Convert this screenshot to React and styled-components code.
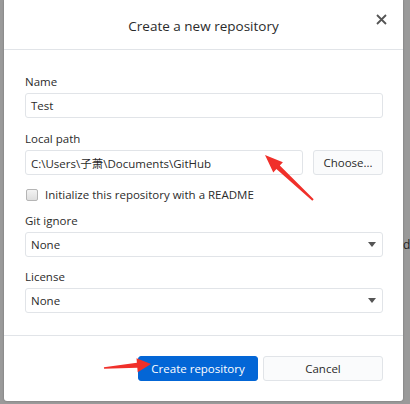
import React from 'react';
import styled, { createGlobalStyle } from 'styled-components';

const GlobalStyle = createGlobalStyle`
  html, body {
    margin: 0;
    padding: 0;
    background: #8f8f8f;
  }
  body {
    font-family: "Open Sans", "Noto Sans", "Noto Sans CJK SC", sans-serif;
    color: #24292e;
  }
`;

const Backdrop = styled.div`
  position: relative;
  width: 410px;
  height: 404px;
  overflow: hidden;
  background: #9a9a9a;
  padding: 0 7px 3px 4px;
  box-sizing: border-box;
`;

const Dialog = styled.div`
  background: #fff;
  height: 401px;
  border-radius: 0 0 3px 3px;
  box-shadow: 0 0 2px rgba(0,0,0,0.3);
  display: flex;
  flex-direction: column;
`;

const Header = styled.div`
  position: relative;
  height: 50px;
  border-bottom: 1px solid #e1e4e8;
  display: flex;
  align-items: center;
  justify-content: center;
  box-sizing: border-box;
  padding-top: 2px;
`;

const Title = styled.h1`
  margin: 0;
  font-size: 13.5px;
  font-weight: 500;
  color: #2b2b2b;
`;

const Close = styled.button`
  position: absolute;
  right: 14px;
  top: 11px;
  width: 16px;
  height: 16px;
  padding: 0;
  border: 0;
  background: none;
  display: flex;
  align-items: center;
  justify-content: center;
`;

const Body = styled.div`
  padding: 24px 20px 0 21px;
  display: flex;
  flex-direction: column;
  height: 286px;
  box-sizing: border-box;
  border-bottom: 1px solid #e1e4e8;
`;

const Label = styled.label`
  font-size: 11.5px;
  color: #2b2b2b;
  line-height: 16px;
  display: block;
  margin-bottom: 3px;
`;

const Field = styled.div`
  margin-bottom: ${p => p.mb || 13}px;
`;

const Input = styled.div`
  height: 25px;
  box-sizing: border-box;
  border: 1px solid #e1e4e8;
  border-radius: 3px;
  font-size: 11.5px;
  color: #2b2b2b;
  padding: 0 5px;
  display: flex;
  align-items: center;
  flex: 1;
  background: #fff;
  white-space: nowrap;
`;

const Row = styled.div`
  display: flex;
  gap: 10px;
`;

const Button = styled.div`
  height: 25px;
  box-sizing: border-box;
  border: 1px solid ${p => (p.primary ? '#0366d6' : '#e1e4e8')};
  border-radius: 3px;
  background: ${p => (p.primary ? '#0366d6' : '#fafbfc')};
  color: ${p => (p.primary ? '#fff' : '#2b2b2b')};
  font-size: 11.5px;
  display: flex;
  align-items: center;
  justify-content: center;
  width: ${p => p.w}px;
`;

const CheckRow = styled.div`
  display: flex;
  align-items: center;
  gap: 7px;
  font-size: 11.5px;
  color: #2b2b2b;
  margin: 9px 0 11px 1px;
`;

const Box = styled.span`
  width: 10px;
  height: 10px;
  border: 1px solid #b5b5b5;
  border-radius: 2px;
  background: linear-gradient(#f3f3f3, #dedede);
`;

const Select = styled(Input)`
  justify-content: space-between;
  padding-right: 6px;
`;

const Caret = styled.span`
  width: 0;
  height: 0;
  border-left: 4px solid transparent;
  border-right: 4px solid transparent;
  border-top: 5px solid #555;
`;

const Footer = styled.div`
  display: flex;
  justify-content: flex-end;
  gap: 5px;
  padding: 20px 20px 0 0;
`;

const Arrows = styled.svg`
  position: absolute;
  left: 0;
  top: 0;
  pointer-events: none;
`;

const Edge = styled.span`
  position: absolute;
  left: 403px;
  top: 236px;
  font-size: 12px;
  color: #222;
`;

export default function App() {
  return (
    <>
      <GlobalStyle />
      <Backdrop>
        <Dialog>
          <Header>
            <Title>Create a new repository</Title>
            <Close>
              <svg width="11" height="11" viewBox="0 0 11 11">
                <path d="M1 1L10 10M10 1L1 10" stroke="#555" strokeWidth="1.8" />
              </svg>
            </Close>
          </Header>
          <Body>
            <Field>
              <Label>Name</Label>
              <Input>Test</Input>
            </Field>
            <Field mb={3}>
              <Label>Local path</Label>
              <Row>
                <Input>C:\Users\子萧\Documents\GitHub</Input>
                <Button w={70}>Choose...</Button>
              </Row>
            </Field>
            <CheckRow>
              <Box />
              Initialize this repository with a README
            </CheckRow>
            <Field mb={12}>
              <Label>Git ignore</Label>
              <Select>None<Caret /></Select>
            </Field>
            <Field>
              <Label>License</Label>
              <Select>None<Caret /></Select>
            </Field>
          </Body>
          <Footer>
            <Button primary w={120}>Create repository</Button>
            <Button w={120}>Cancel</Button>
          </Footer>
        </Dialog>
        <Edge>d</Edge>
        <Arrows width="410" height="404">
          <polygon
            points="313.7,199.3 279.8,165.5 282.9,162.2 265,155 273.3,172.4 276.4,169.1 312.3,200.7"
            fill="#f0302a"
          />
          <polygon
            points="103.9,367.2 136.9,362.7 136.5,358.2 151,364 137.7,372.2 137.3,367.7 104.1,368.8"
            fill="#f0302a"
          />
        </Arrows>
      </Backdrop>
    </>
  );
}
